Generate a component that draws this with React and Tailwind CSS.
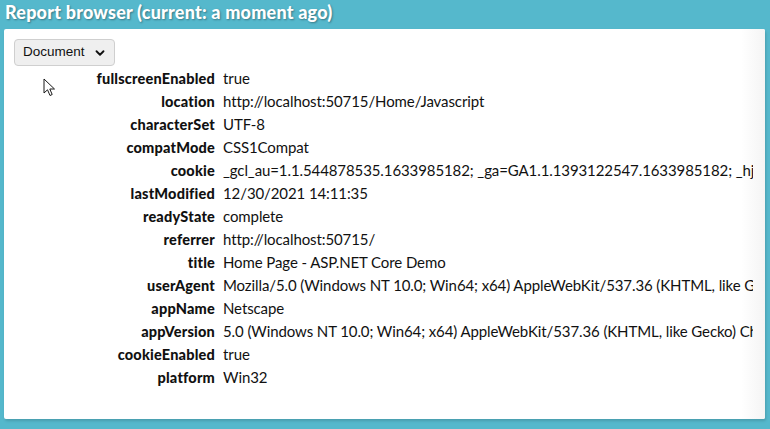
import { ChevronDown } from 'lucide-react'

const rows = [
  ['fullscreenEnabled', 'true'],
  ['location', 'http://localhost:50715/Home/Javascript'],
  ['characterSet', 'UTF-8'],
  ['compatMode', 'CSS1Compat'],
  ['cookie', '_gcl_au=1.1.544878535.1633985182; _ga=GA1.1.1393122547.1633985182; _hjid=c7a1f2e4-0b1d-4a6e-9f3c-2d8e5b7a9c10'],
  ['lastModified', '12/30/2021 14:11:35'],
  ['readyState', 'complete'],
  ['referrer', 'http://localhost:50715/'],
  ['title', 'Home Page - ASP.NET Core Demo'],
  ['userAgent', 'Mozilla/5.0 (Windows NT 10.0; Win64; x64) AppleWebKit/537.36 (KHTML, like Gecko) Chrome/96.0.4664.110 Safari/537.36'],
  ['appName', 'Netscape'],
  ['appVersion', '5.0 (Windows NT 10.0; Win64; x64) AppleWebKit/537.36 (KHTML, like Gecko) Chrome/96.0.4664.110 Safari/537.36'],
  ['cookieEnabled', 'true'],
  ['platform', 'Win32'],
]

function Cursor() {
  return (
    <svg className="absolute left-[43px] top-[78px]" width="13" height="19" viewBox="0 0 13 19">
      <path d="M1 1 L1 15 L4.5 11.8 L7 17.5 L9.2 16.5 L6.8 11 L11.5 11 Z" fill="#fff" stroke="#1a1a1a" strokeWidth="1" strokeLinejoin="round" />
    </svg>
  )
}

export default function App() {
  return (
    <div className="w-[770px] h-[429px] bg-[#55b8cc] relative overflow-hidden" style={{ fontFamily: 'Lato, "Open Sans", sans-serif' }}>
      <div className="h-[29px] pl-[5px]">
        <h1 className="text-[18px] font-black text-white leading-[24px] tracking-[0.2px] [text-shadow:1px_1px_2px_rgba(0,0,0,0.35)]">
          Report browser (current: a moment ago)
        </h1>
      </div>
      <div className="mx-[4px] mr-[5px] h-[390px] bg-white rounded-[2px] shadow-[1px_2px_3px_rgba(0,0,0,0.15)] relative overflow-hidden">
        <div className="absolute right-0 top-0 bottom-0 w-[24px] bg-gradient-to-r from-white to-[#f4f4f4] pointer-events-none" />
        <div className="pt-[10px] pl-[10px]">
          <div className="w-[101px] h-[27px] bg-[#efefef] border border-[#cfcfcf] rounded-[4px] flex items-center justify-between pl-[8px] pr-[7px]" style={{ fontFamily: '"Liberation Sans", Arial, sans-serif' }}>
            <span className="text-[13.5px] text-[#111]">Document</span>
            <ChevronDown size={14} strokeWidth={3.2} className="text-[#111]" />
          </div>
        </div>
        <div className="grid grid-cols-[211px_1fr] gap-x-[8px] pr-[12px] pt-[1px] relative">
          {rows.map(([k, v]) => (
            <div key={k} className="contents">
              <div className="text-right font-black text-[14.5px] leading-[23px] text-[#111] tracking-[0.2px]">{k}</div>
              <div className="text-[15px] leading-[23px] text-[#111] whitespace-nowrap overflow-hidden tracking-[-0.1px]">{v}</div>
            </div>
          ))}
        </div>
      </div>
      <Cursor />
    </div>
  )
}
